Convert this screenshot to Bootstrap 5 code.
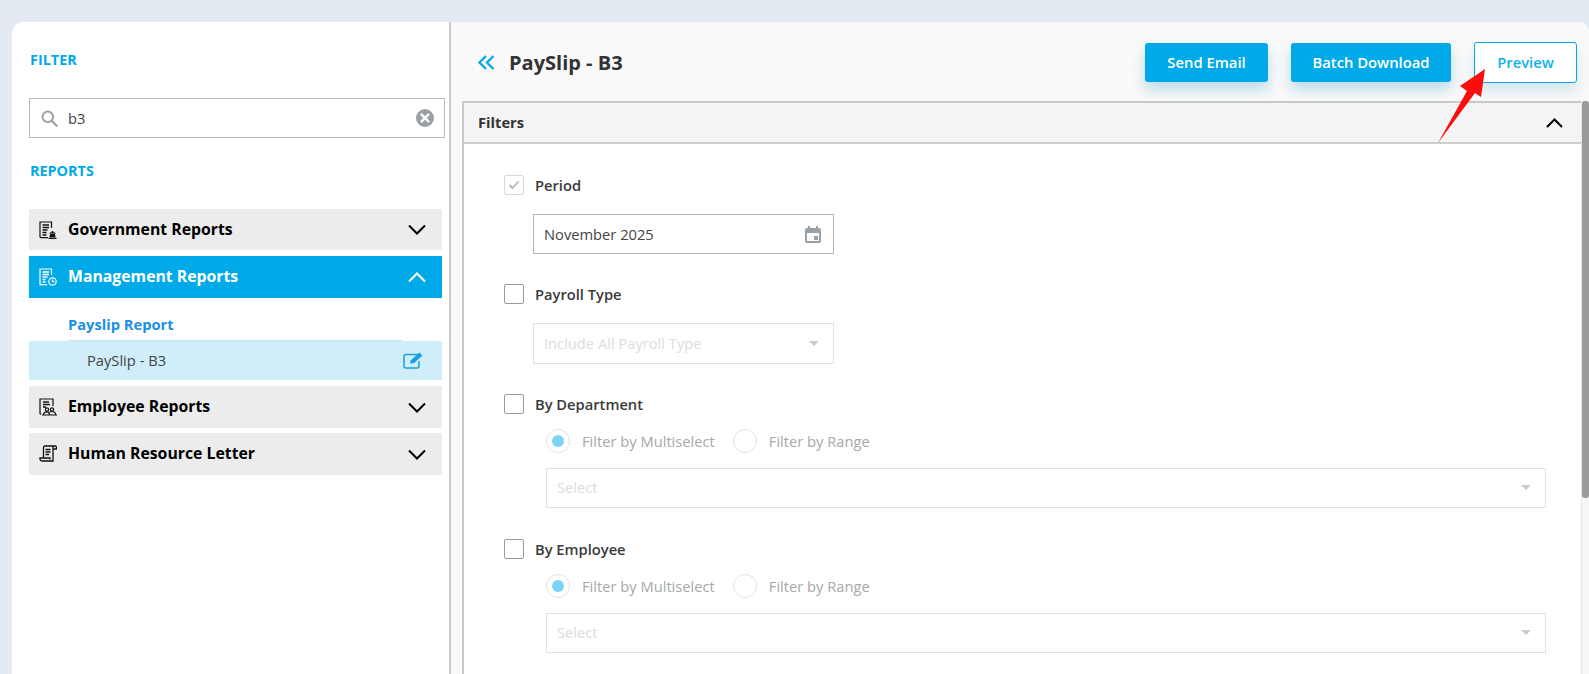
<!DOCTYPE html>
<html lang="en">
<head>
<meta charset="utf-8">
<title>PaySlip - B3</title>
<link href="https://cdn.jsdelivr.net/npm/bootstrap@5.3.0/dist/css/bootstrap.min.css" rel="stylesheet">
<style>
html,body{height:100%;overflow:hidden}
body{background:#e3eaf2;font-family:"Open Sans","Noto Sans",sans-serif;font-size:14.7px;color:#333}
.shell{height:674px;padding:22px 0 0 12px}
.shell-in{height:652px;border-radius:12px 10px 0 0;overflow:hidden;background:#fff}
.side{width:439px;flex:none;background:#fff;border-right:2px solid #c8c8c8;padding:0 7px 0 17px}
.side-lbl{color:#00a9e8;font-weight:700;font-size:14.4px;line-height:20px;margin:0 0 0 1px}
.lbl-a{padding-top:28px}
.lbl-b{padding-top:23px}
.srch{height:40px;border:1px solid #bbb;margin:28px -3px 0 0;padding:0 10px 0 11px;gap:10px;color:#444;font-size:14.7px}
.acc{height:42px;background:#ececec;color:#000;font-weight:700;font-size:15.8px;padding:0 16px 0 10px;gap:11px;margin-bottom:5px}
.acc.on{background:#00a9e8;color:#fff}
.acc-first{margin-top:28px;height:41px;margin-bottom:6px}
.sub-h{margin:0 39px;height:43px;line-height:20px;padding-top:16px;color:#1a8fe8;font-weight:700;font-size:14.7px;border-bottom:1px solid #c4e6f6}
.sub-r{height:39px;background:#d0edfa;padding:0 18px 0 58px;margin-bottom:6px;color:#444;font-size:14.7px}
.main{background:#f9f9f9;position:relative;min-width:0}
.topbar{height:79px;padding:2px 12px 0 27px}
.ttl{font-size:20px;font-weight:700;color:#333;margin:0 0 0 14px;line-height:1.2;padding-top:1px}
.act{height:39px;background:#00a9e8;color:#fff;font-weight:600;font-size:14.8px;border:0;border-radius:3px;box-shadow:0 8px 14px rgba(0,130,190,.25);padding:0;margin-right:23px}
.act-a{width:123px}
.act-b{width:160px}
.act-c{width:103px;height:41px;background:#fff;color:#10b0f0;border:1px solid #00a9e8;margin:0;box-shadow:0 8px 14px rgba(0,130,190,.15);border-radius:3px;font-weight:600;font-size:14.8px}
.act-c:hover,.act:hover{background:inherit}
.panel{margin:0 8px 0 11px;border:2px solid #c9c9c9;border-bottom:0;background:#fff;border-right:0;height:573px;overflow:hidden}
.panel-h{height:41px;background:#f4f4f4;border-bottom:2px solid #cfcfcf;padding:0 18px 0 14px;font-weight:700;font-size:14.7px;color:#333}
.panel-b{padding:0 0 0 40px}
.ck{width:20px;height:20px;flex:none;border:1px solid #999;border-radius:2px;background:#fff}
.ck.dis{border-color:#d8d8d8}
.fld-h{gap:11px;font-weight:600;font-size:14.7px;color:#3a3a3a;height:20px;line-height:20px}
.fld-p{padding-top:31px;height:51px}
.box{height:40px;border:1px solid #b5b5b5;background:#fff;width:301px;padding:0 12px 0 10px;font-size:14.7px;color:#444;margin-left:29px}
.box.off{border-color:#e2e2e2;color:#dcdcdc;height:41px}
.box.wide{width:1000px;height:40px;margin-left:42px;padding-bottom:2px}
.rad-row{margin-left:42px;height:24px;font-size:14.7px;color:#a8a8a8}
.rad{width:24px;height:24px;border:1px solid #e2e2e2;border-radius:50%;flex:none;background:#fff;display:flex;align-items:center;justify-content:center}
.rad i{display:block;width:12px;height:12px;border-radius:50%;background:#7dd3f5}
.rad.next{margin-left:18px}
.tri{width:0;height:0;border-left:5px solid transparent;border-right:5px solid transparent;border-top:5px solid #c6ccd2;margin-right:2px}
.sb{position:absolute;right:0;top:79px;bottom:0;width:8px;background:#f6f6f6;border-left:1px solid #e6e6e6}
.sb i{display:block;height:397px;background:#9a9a9a;border-radius:3px}
.arrow{position:absolute;left:0;top:0;width:1589px;height:674px;pointer-events:none}
.m19{margin-top:19px}.m30{margin-top:30px}.m31{margin-top:31px}.m15{margin-top:15px}
</style>
</head>
<body>
<div class="shell">
<div class="shell-in d-flex">
  <aside class="side">
    <p class="side-lbl lbl-a">FILTER</p>
    <div class="srch d-flex align-items-center">
      <svg width="17" height="17" viewBox="0 0 18 18" fill="none" stroke="#9aa0a6" stroke-width="2"><circle cx="7.2" cy="7.2" r="5.600"/><path d="M11.400 11.400 16.600 16.600" stroke-linecap="round" stroke-width="2.400"/></svg>
      <span class="flex-grow-1">b3</span>
      <svg width="18" height="18" viewBox="0 0 18 18"><circle cx="9" cy="9" r="9" fill="#9aa0a6"/><path d="M5.600 5.600l6.800 6.800M12.400 5.600l-6.800 6.800" stroke="#fff" stroke-width="2.400" stroke-linecap="round"/></svg>
    </div>
    <p class="side-lbl lbl-b">REPORTS</p>

    <div class="acc acc-first d-flex align-items-center">
      <svg width="18" height="18" viewBox="0 0 18 18" fill="none" stroke="#111" stroke-width="1.200"><path d="M12.500 7V1H1v15l1 .6h7"/><path d="M3.500 4h6.500M3.500 6.500h6.500M3.500 9h5M3.500 11.500h4M3.500 14h4" stroke-width="1.400"/><path d="M9.500 17.300h8M10.500 15.500h6" stroke-width="1.300"/><path d="M11 15v-2.500h5V15z" fill="#111" stroke="none"/><path d="M13.500 12.500V10.500" stroke-width="1.300"/><path d="M10.500 12.500 13.500 10.500 16.500 12.500" stroke-width="1"/></svg>
      <span class="flex-grow-1">Government Reports</span>
      <svg width="18" height="11" viewBox="0 0 18 11" fill="none" stroke="#000" stroke-width="2"><path d="M1 1.500l8 8 8-8"/></svg>
    </div>
    <div class="acc on d-flex align-items-center mb-0">
      <svg width="18" height="18" viewBox="0 0 18 18" fill="none" stroke="#fff" stroke-width="1.200"><path d="M12.500 7V1H1v15.600h7"/><path d="M3.500 4h6.500M3.500 6.500h6.500M3.500 9h5M3.500 11.500h3M3.500 14h3" stroke-width="1.400"/><circle cx="13.500" cy="13.500" r="3.700"/><path d="M13.500 11.500v2.200h1.800"/></svg>
      <span class="flex-grow-1">Management Reports</span>
      <svg width="18" height="11" viewBox="0 0 18 11" fill="none" stroke="#fff" stroke-width="2"><path d="M1 9.500l8-8 8 8"/></svg>
    </div>
    <div class="sub-h">Payslip Report</div>
    <div class="sub-r d-flex align-items-center justify-content-between">
      <span>PaySlip - B3</span>
      <svg width="21" height="17" viewBox="0 0 21 17" fill="none" stroke="#1a9fe0" stroke-width="1.500"><path d="M14 2.500H3a2 2 0 0 0-2 2v9.500a2 2 0 0 0 2 2h11a2 2 0 0 0 2-2V9"/><path d="M7 11.800l.9-3.600L16.200 .6l3.200 3-8.200 7.400z" fill="#1a9fe0" stroke="none"/></svg>
    </div>
    <div class="acc d-flex align-items-center">
      <svg width="18" height="18" viewBox="0 0 18 18" fill="none" stroke="#111" stroke-width="1.200"><path d="M14 8V1H1v14.500l1 1"/><path d="M4 4h6M4 6.500h7M4 9h3" stroke-width="1.300"/><circle cx="8" cy="11.500" r="1.600"/><circle cx="13" cy="11.500" r="1.600"/><path d="M4.500 17c0-2.500 1.500-3.200 3.500-3.200s2.500.7 2.500 3.200M10.500 14c2.500-1 6-.6 6.500 3M3 17h15"/></svg>
      <span class="flex-grow-1">Employee Reports</span>
      <svg width="18" height="11" viewBox="0 0 18 11" fill="none" stroke="#000" stroke-width="2"><path d="M1 1.500l8 8 8-8"/></svg>
    </div>
    <div class="acc d-flex align-items-center">
      <svg width="18" height="18" viewBox="0 0 18 18" fill="none" stroke="#111" stroke-width="1.300"><path d="M4.500 13V2.500A1.500 1.500 0 0 1 6 1h10a1.500 1.500 0 0 1 1.500 1.500V4H14M14 1.200V16H3a2 2 0 0 1-2-2v-1h10v1.500"/><path d="M6.500 4.500h5M6.500 7h5M6.500 9.500h3.500" stroke-width="1.400"/></svg>
      <span class="flex-grow-1">Human Resource Letter</span>
      <svg width="18" height="11" viewBox="0 0 18 11" fill="none" stroke="#000" stroke-width="2"><path d="M1 1.500l8 8 8-8"/></svg>
    </div>
  </aside>

  <main class="main flex-grow-1 d-flex flex-column">
    <div class="topbar d-flex align-items-center">
      <svg width="17" height="15" viewBox="0 0 17 15" fill="none" stroke="#12a5e6" stroke-width="2.400"><path d="M8 1 1.500 7.500 8 14M15.500 1 9 7.500 15.500 14"/></svg>
      <h1 class="ttl flex-grow-1">PaySlip - B3</h1>
      <button type="button" class="btn act act-a">Send Email</button>
      <button type="button" class="btn act act-b">Batch Download</button>
      <button type="button" class="btn act-c p-0">Preview</button>
    </div>
    <section class="panel">
      <div class="panel-h d-flex align-items-center justify-content-between">
        <span>Filters</span>
        <svg width="17" height="10" viewBox="0 0 17 10" fill="none" stroke="#000" stroke-width="2"><path d="M1 9l7.500-7.500L16 9"/></svg>
      </div>
      <div class="panel-b">
        <div class="fld-h fld-p d-flex align-items-center">
          <span class="ck dis d-flex align-items-center justify-content-center"><svg width="12" height="10" viewBox="0 0 12 10" fill="none" stroke="#b5b5b5" stroke-width="1.800"><path d="M1.500 5l3 3 6-6.500"/></svg></span>
          <span>Period</span>
        </div>
        <div class="box m19 d-flex align-items-center justify-content-between">
          <span>November 2025</span>
          <svg width="16" height="17" viewBox="0 0 16 17"><path d="M3 0h2v2h6V0h2v2h1a2 2 0 0 1 2 2v11a2 2 0 0 1-2 2H2a2 2 0 0 1-2-2V4a2 2 0 0 1 2-2h1zM2 7V15h12V7zM9 10h4v4H9z" fill="#98a0a8" fill-rule="evenodd"/></svg>
        </div>
        <div class="fld-h m30 d-flex align-items-center">
          <span class="ck"></span><span>Payroll Type</span>
        </div>
        <div class="box off m19 d-flex align-items-center justify-content-between">
          <span>Include All Payroll Type</span><i class="tri"></i>
        </div>
        <div class="fld-h m30 d-flex align-items-center">
          <span class="ck"></span><span>By Department</span>
        </div>
        <div class="rad-row m15 d-flex align-items-center">
          <span class="rad"><i></i></span><span class="ms-2 ps-1">Filter by Multiselect</span>
          <span class="rad next"></span><span class="ms-2 ps-1">Filter by Range</span>
        </div>
        <div class="box off wide m15 d-flex align-items-center justify-content-between">
          <span>Select</span><i class="tri"></i>
        </div>
        <div class="fld-h m31 d-flex align-items-center">
          <span class="ck"></span><span>By Employee</span>
        </div>
        <div class="rad-row m15 d-flex align-items-center">
          <span class="rad"><i></i></span><span class="ms-2 ps-1">Filter by Multiselect</span>
          <span class="rad next"></span><span class="ms-2 ps-1">Filter by Range</span>
        </div>
        <div class="box off wide m15 d-flex align-items-center justify-content-between">
          <span>Select</span><i class="tri"></i>
        </div>
      </div>
    </section>
    <div class="sb"><i></i></div>
  </main>
</div>
</div>
<svg class="arrow" viewBox="0 0 1589 674"><polygon points="1438,143 1467,91 1460,86 1485,69 1481,97 1475,93" fill="#fb0d0d"/></svg>
</body>
</html>
